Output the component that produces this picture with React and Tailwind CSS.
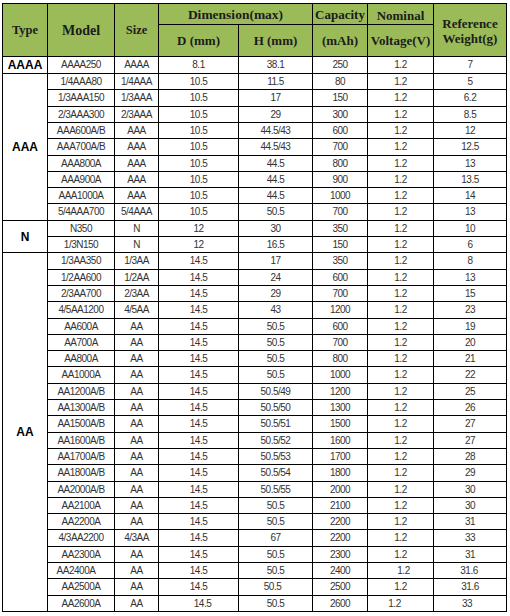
import React from "react";

const groups = [
  { type: "AAAA", span: "row-span-1", items: [["AAAA250", "AAAA", "8.1", "38.1", "250", "1.2", "7"]] },
  {
    type: "AAA",
    span: "row-span-9",
    items: [
      ["1/4AAA80", "1/4AAA", "10.5", "11.5", "80", "1.2", "5"],
      ["1/3AAA150", "1/3AAA", "10.5", "17", "150", "1.2", "6.2"],
      ["2/3AAA300", "2/3AAA", "10.5", "29", "300", "1.2", "8.5"],
      ["AAA600A/B", "AAA", "10.5", "44.5/43", "600", "1.2", "12"],
      ["AAA700A/B", "AAA", "10.5", "44.5/43", "700", "1.2", "12.5"],
      ["AAA800A", "AAA", "10.5", "44.5", "800", "1.2", "13"],
      ["AAA900A", "AAA", "10.5", "44.5", "900", "1.2", "13.5"],
      ["AAA1000A", "AAA", "10.5", "44.5", "1000", "1.2", "14"],
      ["5/4AAA700", "5/4AAA", "10.5", "50.5", "700", "1.2", "13"],
    ],
  },
  {
    type: "N",
    span: "row-span-2",
    items: [
      ["N350", "N", "12", "30", "350", "1.2", "10"],
      ["1/3N150", "N", "12", "16.5", "150", "1.2", "6"],
    ],
  },
  {
    type: "AA",
    span: "row-span-22",
    items: [
      ["1/3AA350", "1/3AA", "14.5", "17", "350", "1.2", "8"],
      ["1/2AA600", "1/2AA", "14.5", "24", "600", "1.2", "13"],
      ["2/3AA700", "2/3AA", "14.5", "29", "700", "1.2", "15"],
      ["4/5AA1200", "4/5AA", "14.5", "43", "1200", "1.2", "23"],
      ["AA600A", "AA", "14.5", "50.5", "600", "1.2", "19"],
      ["AA700A", "AA", "14.5", "50.5", "700", "1.2", "20"],
      ["AA800A", "AA", "14.5", "50.5", "800", "1.2", "21"],
      ["AA1000A", "AA", "14.5", "50.5", "1000", "1.2", "22"],
      ["AA1200A/B", "AA", "14.5", "50.5/49", "1200", "1.2", "25"],
      ["AA1300A/B", "AA", "14.5", "50.5/50", "1300", "1.2", "26"],
      ["AA1500A/B", "AA", "14.5", "50.5/51", "1500", "1.2", "27"],
      ["AA1600A/B", "AA", "14.5", "50.5/52", "1600", "1.2", "27"],
      ["AA1700A/B", "AA", "14.5", "50.5/53", "1700", "1.2", "28"],
      ["AA1800A/B", "AA", "14.5", "50.5/54", "1800", "1.2", "29"],
      ["AA2000A/B", "AA", "14.5", "50.5/55", "2000", "1.2", "30"],
      ["AA2100A", "AA", "14.5", "50.5", "2100", "1.2", "30"],
      ["AA2200A", "AA", "14.5", "50.5", "2200", "1.2", "31"],
      ["4/3AA2200", "4/3AA", "14.5", "67", "2200", "1.2", "33"],
      ["AA2300A", "AA", "14.5", "50.5", "2300", "1.2", "31"],
      ["AA2400A", "AA", "14.5", "50.5", "2400", "1.2", "31.6"],
      ["AA2500A", "AA", "14.5", "50.5", "2500", "1.2", "31.6"],
      ["AA2600A", "AA", "14.5", "50.5", "2600", "1.2", "33"],
    ],
  },
];

// small hand-placement quirks seen in the original sheet
const shifts = {
  "AA2400A-0": "pr-[10px]",
  "AA2400A-5": "pl-[6px]",
  "AA2400A-6": "pr-[2px]",
  "AA2500A-3": "pr-[6px]",
  "AA2600A-2": "pl-[8px]",
  "AA2600A-5": "pr-[12px]",
  "AA2600A-6": "pr-[6px]",
};

const head =
  "bg-[#9bbb59] flex items-center justify-center text-center font-bold text-[#1c1c1c] font-['Liberation_Serif','Times_New_Roman',serif] leading-[15px]";
const cell =
  "bg-white flex items-center justify-center font-['Liberation_Sans',Arial,sans-serif] text-[10px] tracking-[-0.5px] text-[#333333] leading-none whitespace-nowrap";

export default function App() {
  return (
    <div className="bg-white w-[510px] h-[616px] pt-[3px] pl-[2px]">
      <div className="grid w-fit gap-px bg-black p-px grid-cols-[44px_66px_43px_79px_73px_54px_65px_72px] grid-rows-[20px_31px_16px_15px_16px_15px_15px_16px_15px_15px_15px_16px_15px_15px_16px_15px_15px_16px_15px_15px_15px_16px_15px_15px_16px_15px_15px_16px_15px_15px_15px_16px_15px_15px_16px_15px]">
        <div className={`${head} row-span-2 text-[12.5px]`}>Type</div>
        <div className={`${head} row-span-2 text-[14px]`}>Model</div>
        <div className={`${head} row-span-2 text-[12.5px]`}>Size</div>
        <div className={`${head} col-span-2 text-[13.5px]`}>Dimension(max)</div>
        <div className={`${head} text-[13px]`}>Capacity</div>
        <div className={`${head} text-[13px] pt-[3px]`}>Nominal</div>
        <div className={`${head} row-span-2 flex-col text-[13px] pt-[1px]`}>
          <span>Reference</span>
          <span>Weight(g)</span>
        </div>
        <div className={`${head} text-[13px]`}>D (mm)</div>
        <div className={`${head} text-[13px]`}>H (mm)</div>
        <div className={`${head} text-[13px]`}>(mAh)</div>
        <div className={`${head} text-[13px]`}>Voltage(V)</div>

        {groups.map((g) => (
          <React.Fragment key={g.type}>
            <div
              className={`bg-white flex items-center justify-center font-['Liberation_Sans',Arial,sans-serif] font-bold text-[12px] text-black ${g.span}`}
            >
              {g.type}
            </div>
            {g.items.map((r) =>
              r.map((v, i) => (
                <div key={r[0] + i} className={`${cell} ${shifts[r[0] + "-" + i] || ""}`}>
                  {v}
                </div>
              ))
            )}
          </React.Fragment>
        ))}
      </div>
    </div>
  );
}
